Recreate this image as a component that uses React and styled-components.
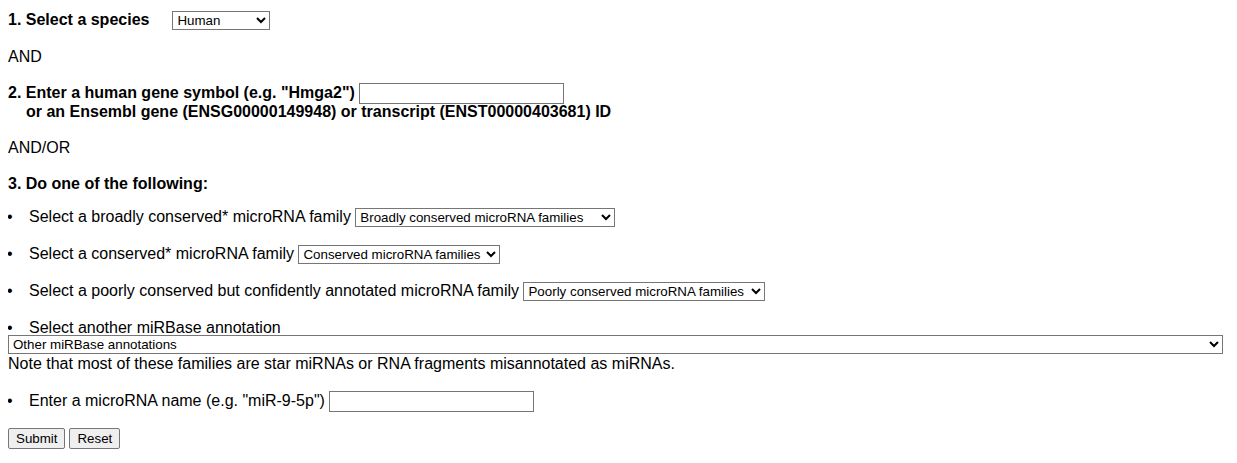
import styled, { createGlobalStyle } from 'styled-components';

const GlobalStyle = createGlobalStyle`
  body {
    margin: 8px;
    font-family: "Liberation Sans", Arial, sans-serif;
    font-size: 16px;
    line-height: 20px;
    color: #000;
    background: #fff;
  }
`;

const Form = styled.form`
  margin: 0;
`;

const Step = styled.p`
  margin: ${props => props.$top ?? 16}px 0 ${props => props.$bottom ?? 16}px;
  font-weight: bold;
`;

const Plain = styled.p`
  margin: 16px 0;
`;

const Note = styled.div`
  margin: 0 0 17px;
`;

const Indent = styled.span`
  display: block;
  margin-top: -2px;
  padding-left: 18px;
`;

const Select = styled.select`
  display: ${props => props.$block ? 'block' : 'inline-block'};
  font-family: "Liberation Sans", Arial, sans-serif;
  font-size: 13.333px;
  height: 19px;
  width: ${props => props.$width}px;
  margin: ${props => props.$block ? '-3px 0 0' : `0 0 0 ${props.$gap || 0}px`};
  padding: 0;
  border: 1px solid #767676;
  border-radius: 0;
  background: #fff;
  color: #000;
  vertical-align: baseline;
`;

const TextInput = styled.input`
  font-family: "Liberation Sans", Arial, sans-serif;
  font-size: 13.333px;
  width: 205px;
  height: 21px;
  box-sizing: border-box;
  padding: 1px 2px;
  border: 1px solid #767676;
  border-radius: 0;
  background: #fff;
`;

const List = styled.ul`
  margin: ${props => props.$top ?? 16}px 0 ${props => props.$bottom ?? 16}px;
  padding-left: 21px;
  list-style: none;
`;

const Item = styled.li`
  margin: ${props => props.$gap ?? 0}px 0 0;
  &::before {
    content: "•";
    display: inline-block;
    width: 22px;
    margin-left: -22px;
  }
`;

const Buttons = styled.div`
  display: flex;
  gap: 4px;
  margin-top: 3px;
`;

const Button = styled.button`
  font-family: "Liberation Sans", Arial, sans-serif;
  font-size: 13.333px;
  height: 21px;
  padding: 1px 7px;
  border: 1px solid #767676;
  border-radius: 2px;
  background: #efefef;
  color: #000;
`;

const App = () => {
  return (
    <Form>
      <GlobalStyle />
      <Step $top={2} $bottom={17}>
        1. Select a species
        <Select $width={98} $gap={23} defaultValue="Human">
          <option>Human</option>
          <option>Mouse</option>
          <option>Rat</option>
        </Select>
      </Step>
      <Plain>AND</Plain>
      <Step>
        2. Enter a human gene symbol (e.g. "Hmga2") <TextInput type="text" />
        <Indent>or an Ensembl gene (ENSG00000149948) or transcript (ENST00000403681) ID</Indent>
      </Step>
      <Plain>AND/OR</Plain>
      <Step $bottom={13}>3. Do one of the following:</Step>
      <List $top={13} $bottom={0}>
        <Item>
          Select a broadly conserved* microRNA family{' '}
          <Select $width={260}>
            <option>Broadly conserved microRNA families</option>
          </Select>
        </Item>
        <Item $gap={17}>
          Select a conserved* microRNA family{' '}
          <Select $width={202}>
            <option>Conserved microRNA families</option>
          </Select>
        </Item>
        <Item $gap={17}>
          Select a poorly conserved but confidently annotated microRNA family{' '}
          <Select $width={242}>
            <option>Poorly conserved microRNA families</option>
          </Select>
        </Item>
        <Item $gap={17}>Select another miRBase annotation</Item>
      </List>
      <Select $block $width={1215}>
        <option>Other miRBase annotations</option>
      </Select>
      <Note>Note that most of these families are star miRNAs or RNA fragments misannotated as miRNAs.</Note>
      <List>
        <Item>
          Enter a microRNA name (e.g. "miR-9-5p") <TextInput type="text" />
        </Item>
      </List>
      <Buttons>
        <Button type="submit">Submit</Button>
        <Button type="reset">Reset</Button>
      </Buttons>
    </Form>
  );
};

export default App;
